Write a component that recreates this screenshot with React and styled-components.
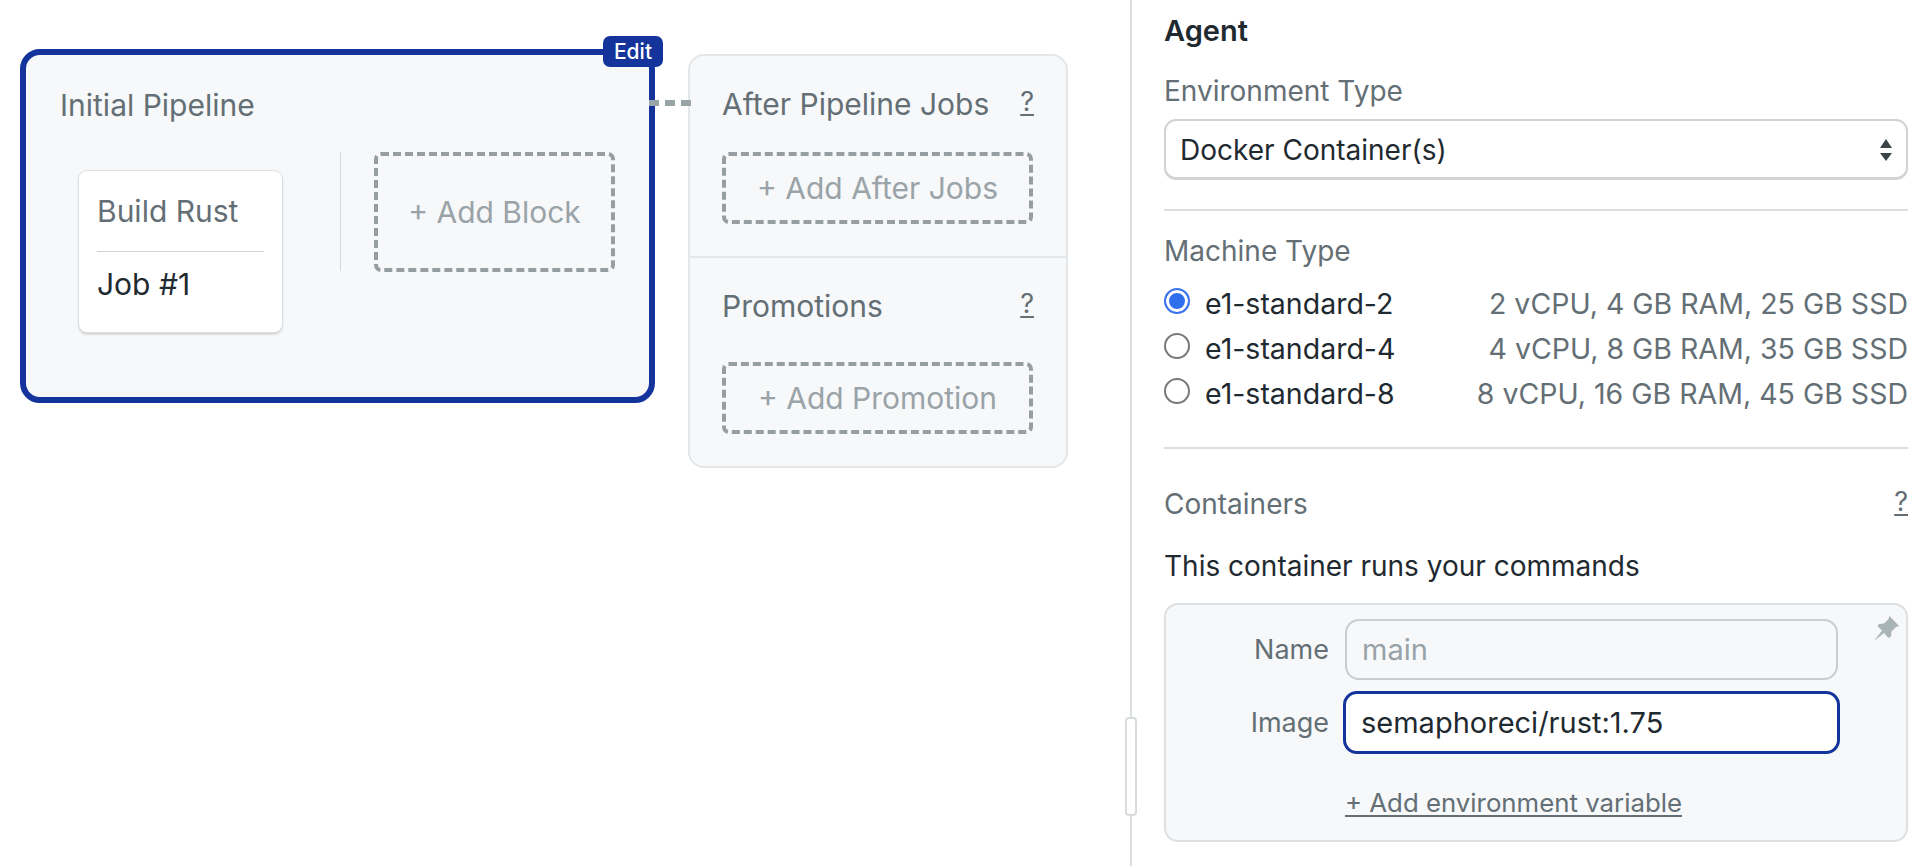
import React from "react";
import styled, { createGlobalStyle } from "styled-components";

const Global = createGlobalStyle`
  html, body { margin: 0; padding: 0; background: #fff; }
  body { font-family: Inter, "Liberation Sans", sans-serif; color: #1f2a30; overflow: hidden; }
  * { box-sizing: border-box; }
`;

const Page = styled.div`
  display: flex;
  width: 1928px;
  height: 866px;
  overflow: hidden;
`;

const Canvas = styled.section`
  width: 1130px;
  flex: none;
  display: flex;
  align-items: flex-start;
  gap: 33px;
  padding: 49px 0 0 20px;
`;

const PipelineCard = styled.div`
  position: relative;
  width: 635px;
  height: 354px;
  flex: none;
  padding: 32px 31px 0 34px;
  background: #f6f8fa;
  border: 6px solid #14349b;
  border-radius: 20px;
`;

const EditBadge = styled.div`
  position: absolute;
  top: -19px;
  right: -14px;
  width: 60px;
  height: 31px;
  display: flex;
  align-items: center;
  justify-content: center;
  background: #14349b;
  border-radius: 7px;
  color: #fff;
  font-size: 21px;
  font-weight: 500;
`;

const Connector = styled.div`
  position: absolute;
  top: 45px;
  right: -42px;
  width: 42px;
  height: 6px;
  background: repeating-linear-gradient(90deg, #9aa5a8 0 10px, transparent 10px 16px);
`;

const CardTitle = styled.div`
  font-size: 30px;
  line-height: 36px;
  color: #646f75;
`;

const PipelineBody = styled.div`
  display: flex;
  align-items: flex-start;
  margin-top: 29px;
`;

const BlockCard = styled.div`
  width: 203px;
  height: 161px;
  margin: 19px 0 0 19px;
  padding: 0 18px;
  flex: none;
  background: #fff;
  border-radius: 8px;
  box-shadow: 0 0 0 1px #dcdfe1, 0 2px 3px rgba(0, 0, 0, 0.22);
`;

const BlockName = styled.div`
  height: 81px;
  display: flex;
  align-items: center;
  font-size: 30px;
  color: #646f75;
  border-bottom: 1px solid #cfd3d5;
`;

const JobName = styled.div`
  margin-top: 14px;
  font-size: 30px;
  line-height: 36px;
  color: #1f2a30;
`;

const VRule = styled.div`
  width: 1px;
  height: 119px;
  margin: 0 33px 0 58px;
  background: #d5d9db;
`;

const DashedAction = styled.div`
  display: flex;
  align-items: center;
  justify-content: center;
  flex: none;
  width: ${(p) => p.$w}px;
  height: ${(p) => p.$h}px;
  border: 4px dashed #969ea2;
  border-radius: 7px;
  color: #9aa3a8;
  font-size: 30px;
`;

const SideCard = styled.div`
  width: 380px;
  height: 414px;
  margin-top: 5px;
  flex: none;
  background: #f6f8fa;
  border: 2px solid #e4e7e9;
  border-radius: 16px;
  overflow: hidden;
`;

const SideSection = styled.div`
  height: ${(p) => p.$h}px;
  padding: ${(p) => p.$top}px 32px 0 32px;
  & + & { border-top: 2px solid #e4e7e9; }
`;

const SideHead = styled.div`
  display: flex;
  justify-content: space-between;
  align-items: center;
  height: 36px;
  margin-bottom: ${(p) => p.$gap}px;
`;

const Help = styled.span`
  margin-top: -5px;
  font-size: 27px;
  color: #646f75;
  text-decoration: underline;
  text-underline-offset: 3px;
`;

const Panel = styled.aside`
  flex: 1;
  position: relative;
  border-left: 2px solid #dcdfe1;
  padding: 14px 20px 0 32px;
`;

const Handle = styled.div`
  position: absolute;
  left: -7px;
  top: 717px;
  width: 12px;
  height: 99px;
  background: #fff;
  border: 2px solid #d8dcde;
  border-radius: 4px;
`;

const AgentTitle = styled.h2`
  margin: 0;
  font-size: 29px;
  line-height: 34px;
  font-weight: 600;
  color: #1f2a30;
`;

const FieldLabel = styled.div`
  font-size: 28px;
  line-height: 34px;
  color: #646f75;
  margin-top: ${(p) => p.$top || 0}px;
`;

const SelectWrap = styled.div`
  position: relative;
  margin-top: 11px;
`;

const Select = styled.select`
  appearance: none;
  display: block;
  width: 100%;
  height: 61px;
  padding: 2px 14px 0;
  background: #fff;
  border: 2px solid #d0d4d6;
  border-bottom-width: 3px;
  border-radius: 12px;
  font: inherit;
  font-size: 28px;
  color: #1f2a30;
`;

const SelectArrows = styled.svg`
  position: absolute;
  right: 16px;
  top: 20px;
  width: 12px;
  height: 22px;
  pointer-events: none;
`;

const HRule = styled.hr`
  margin: ${(p) => p.$top}px 0 ${(p) => p.$bottom}px;
  border: 0;
  border-top: 2px solid #dcdfe1;
`;

const RadioList = styled.div`
  display: flex;
  flex-direction: column;
  gap: 8px;
  margin-top: 17px;
`;

const RadioRow = styled.label`
  display: flex;
  align-items: center;
  height: 37px;
`;

const RadioDot = styled.span`
  width: 26px;
  height: 26px;
  flex: none;
  margin-right: 15px;
  margin-top: -5px;
  border-radius: 50%;
  border: 2px solid ${(p) => (p.$on ? "#3b74ee" : "#767a7c")};
  background: ${(p) => (p.$on ? "#2f6fed" : "#fff")};
  box-shadow: ${(p) => (p.$on ? "inset 0 0 0 3px #fff" : "none")};
`;

const RadioName = styled.span`
  font-size: 28.5px;
  color: #1f2a30;
`;

const RadioSpec = styled.span`
  margin-left: auto;
  font-size: 28.5px;
  color: #646f75;
`;

const ContainersHead = styled.div`
  display: flex;
  align-items: center;
  justify-content: space-between;
  height: 34px;
`;

const Lead = styled.p`
  margin: 28px 0 0;
  font-size: 28px;
  line-height: 34px;
  color: #1f2a30;
`;

const ContainerBox = styled.div`
  position: relative;
  margin-top: 20px;
  height: 239px;
  padding: 14px 68px 0 0;
  background: #f6f8fa;
  border: 2px solid #dde1e3;
  border-radius: 14px;
`;

const Pin = styled.svg`
  position: absolute;
  top: 11px;
  right: 7px;
  width: 25px;
  height: 25px;
  color: #a9b4b6;
`;

const FormRow = styled.div`
  display: flex;
  align-items: center;
  margin-top: ${(p) => p.$top || 0}px;
`;

const RowLabel = styled.label`
  width: 179px;
  flex: none;
  text-align: right;
  padding-right: 16px;
  font-size: 27px;
  color: #646f75;
`;

const TextInput = styled.input`
  flex: 1;
  min-width: 0;
  height: ${(p) => (p.$focus ? 63 : 61)}px;
  margin-left: ${(p) => (p.$focus ? -2 : 0)}px;
  margin-right: ${(p) => (p.$focus ? -2 : 0)}px;
  padding: 0 15px;
  background: ${(p) => (p.$focus ? "#fff" : "#f6f8fa")};
  border: ${(p) => (p.$focus ? "3.5px solid #14349b" : "2px solid #c8cdcf")};
  border-radius: 14px;
  outline: none;
  font: inherit;
  font-size: 29px;
  color: #1f2a30;
  &::placeholder { color: #98a2a7; opacity: 1; }
`;

const AddLink = styled.a`
  display: block;
  margin: 32px 0 0 179px;
  font-size: 25.8px;
  line-height: 34px;
  color: #646f75;
  text-decoration: underline;
  text-underline-offset: 3px;
`;

export default function App() {
  return (
    <Page>
      <Global />
      <Canvas>
        <PipelineCard>
          <EditBadge>Edit</EditBadge>
          <Connector />
          <CardTitle>Initial Pipeline</CardTitle>
          <PipelineBody>
            <BlockCard>
              <BlockName>Build Rust</BlockName>
              <JobName>Job #1</JobName>
            </BlockCard>
            <VRule />
            <DashedAction $w={241} $h={120}>+ Add Block</DashedAction>
          </PipelineBody>
        </PipelineCard>
        <SideCard>
          <SideSection $h={200} $top={30}>
            <SideHead $gap={30}>
              <CardTitle>After Pipeline Jobs</CardTitle>
              <Help>?</Help>
            </SideHead>
            <DashedAction $w={311} $h={72}>+ Add After Jobs</DashedAction>
          </SideSection>
          <SideSection $h={210} $top={30}>
            <SideHead $gap={38}>
              <CardTitle>Promotions</CardTitle>
              <Help>?</Help>
            </SideHead>
            <DashedAction $w={311} $h={72}>+ Add Promotion</DashedAction>
          </SideSection>
        </SideCard>
      </Canvas>
      <Panel>
        <Handle />
        <AgentTitle>Agent</AgentTitle>
        <FieldLabel $top={26}>Environment Type</FieldLabel>
        <SelectWrap>
          <Select defaultValue="docker">
            <option value="docker">Docker Container(s)</option>
          </Select>
          <SelectArrows viewBox="0 0 12 22">
            <path d="M6 0 L12 9 H0 Z M0 14 H12 L6 22 Z" fill="#3a4348" />
          </SelectArrows>
        </SelectWrap>
        <HRule $top={29} $bottom={23} />
        <FieldLabel>Machine Type</FieldLabel>
        <RadioList>
          <RadioRow>
            <RadioDot $on />
            <RadioName>e1-standard-2</RadioName>
            <RadioSpec>2 vCPU, 4 GB RAM, 25 GB SSD</RadioSpec>
          </RadioRow>
          <RadioRow>
            <RadioDot />
            <RadioName>e1-standard-4</RadioName>
            <RadioSpec>4 vCPU, 8 GB RAM, 35 GB SSD</RadioSpec>
          </RadioRow>
          <RadioRow>
            <RadioDot />
            <RadioName>e1-standard-8</RadioName>
            <RadioSpec>8 vCPU, 16 GB RAM, 45 GB SSD</RadioSpec>
          </RadioRow>
        </RadioList>
        <HRule $top={35} $bottom={38} />
        <ContainersHead>
          <FieldLabel>Containers</FieldLabel>
          <Help>?</Help>
        </ContainersHead>
        <Lead>This container runs your commands</Lead>
        <ContainerBox>
          <Pin viewBox="0 0 25 25" fill="currentColor">
            <path d="M15.5 0 L25 10 L22 11 L17.5 15.5 L17 20.5 L14.5 22 L10 17 L0 25 L8 14.5 L3.5 10 L5 8 L10 7.5 L14.5 3 Z" />
          </Pin>
          <FormRow>
            <RowLabel>Name</RowLabel>
            <TextInput placeholder="main" readOnly />
          </FormRow>
          <FormRow $top={11}>
            <RowLabel>Image</RowLabel>
            <TextInput $focus value="semaphoreci/rust:1.75" readOnly />
          </FormRow>
          <AddLink>+ Add environment variable</AddLink>
        </ContainerBox>
      </Panel>
    </Page>
  );
}
